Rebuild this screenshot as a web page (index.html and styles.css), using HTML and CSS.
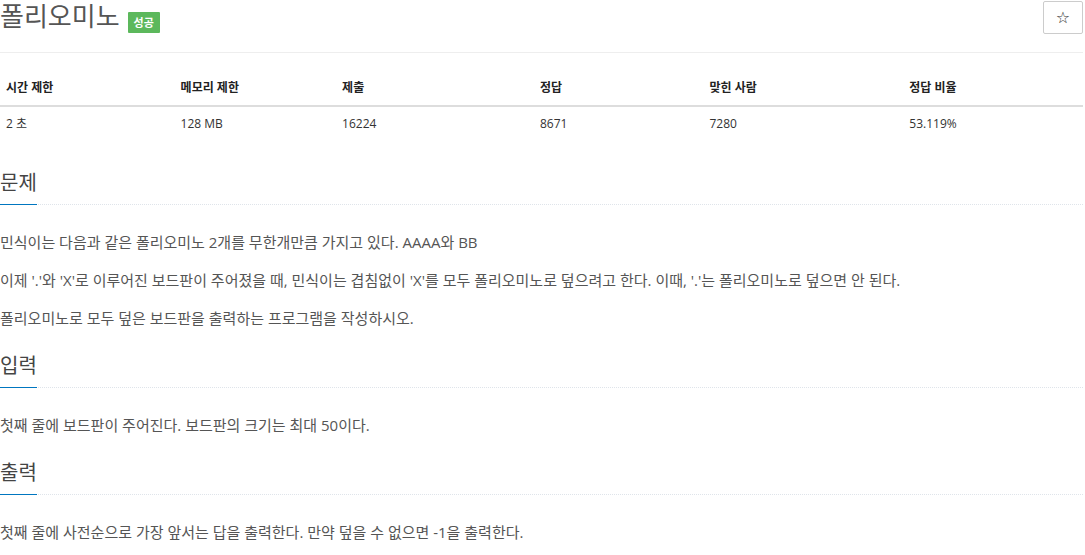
FILE: index.html
```html
<!DOCTYPE html>
<html lang="ko">
<head>
<meta charset="utf-8">
<title>폴리오미노</title>
<link rel="stylesheet" href="styles.css">
</head>
<body>
<div class="page">
  <div class="page-header">
    <h1 class="title"><span class="title-text">폴리오미노</span><span class="badge">성공</span></h1>
    <button class="star-btn" type="button">☆</button>
  </div>
  <table class="info">
    <thead>
      <tr><th>시간 제한</th><th>메모리 제한</th><th>제출</th><th>정답</th><th>맞힌 사람</th><th>정답 비율</th></tr>
    </thead>
    <tbody>
      <tr><td>2 초</td><td>128 MB</td><td>16224</td><td>8671</td><td>7280</td><td>53.119%</td></tr>
    </tbody>
  </table>

  <section class="section first">
    <div class="headline"><h2>문제</h2></div>
    <p>민식이는 다음과 같은 폴리오미노 2개를 무한개만큼 가지고 있다. AAAA와 BB</p>
    <p>이제 '.'와 'X'로 이루어진 보드판이 주어졌을 때, 민식이는 겹침없이 'X'를 모두 폴리오미노로 덮으려고 한다. 이때, '.'는 폴리오미노로 덮으면 안 된다.</p>
    <p>폴리오미노로 모두 덮은 보드판을 출력하는 프로그램을 작성하시오.</p>
  </section>

  <section class="section">
    <div class="headline"><h2>입력</h2></div>
    <p>첫째 줄에 보드판이 주어진다. 보드판의 크기는 최대 50이다.</p>
  </section>

  <section class="section">
    <div class="headline"><h2>출력</h2></div>
    <p>첫째 줄에 사전순으로 가장 앞서는 답을 출력한다. 만약 덮을 수 없으면 -1을 출력한다.</p>
  </section>
</div>
</body>
</html>
```

FILE: styles.css
```css
html, body {
  margin: 0;
  padding: 0;
  background: #fff;
}
body {
  font-family: "Open Sans", "Noto Sans CJK KR", sans-serif;
  color: #333;
  font-size: 13px;
}
.page {
  width: 1083px;
}
.page-header {
  display: flex;
  justify-content: space-between;
  align-items: flex-start;
  border-bottom: 1px solid #eee;
  height: 52px;
}
.title {
  margin: 0;
  font-size: 26px;
  font-weight: 400;
  line-height: 32px;
  color: #555;
  display: flex;
  align-items: flex-start;
}
.badge {
  display: inline-block;
  background: #5cb85c;
  color: #fff;
  font-size: 11px;
  font-weight: 700;
  line-height: 13px;
  padding: 4px 6px;
  border-radius: 1px;
  margin-top: 12px;
  margin-left: 8px;
}
.star-btn {
  margin-top: 1px;
  width: 40px;
  height: 33px;
  background: #fff;
  border: 1px solid #ccc;
  border-radius: 2px;
  font-family: "DejaVu Sans", sans-serif;
  font-size: 16px;
  color: #333;
  padding: 0;
  line-height: 1;
}
.info {
  margin-top: 18px;
  width: 1083px;
  border-collapse: collapse;
  table-layout: fixed;
}
.info th, .info td {
  text-align: left;
  padding: 8px 6px;
  line-height: 18px;
  font-size: 12px;
}
.info th {
  font-weight: 700;
  color: #222;
  border-bottom: 2px solid #ddd;
}
.info td {
  color: #333;
}
.info th:nth-child(1) { width: 161px; }
.info th:nth-child(2) { width: 148px; }
.info th:nth-child(3) { width: 184px; }
.info th:nth-child(4) { width: 156px; }
.info th:nth-child(5) { width: 186px; }
.info th:nth-child(6) { width: 166px; }

.section {
  margin-top: 24px;
}
.section.first {
  margin-top: 28px;
}
.headline {
  border-bottom: 1px dotted #dfe4ea;
  margin-bottom: 27px;
}
.headline h2 {
  display: inline-block;
  margin: 0 0 -1px 0;
  font-size: 20px;
  font-weight: 400;
  line-height: 28px;
  padding: 0 0 7px 0;
  color: #444;
  border-bottom: 1px solid #0076c0;
  width: 37px;
}
.section p {
  margin: 0 0 18px 0;
  font-size: 15px;
  line-height: 20px;
  color: #555;
}
```
